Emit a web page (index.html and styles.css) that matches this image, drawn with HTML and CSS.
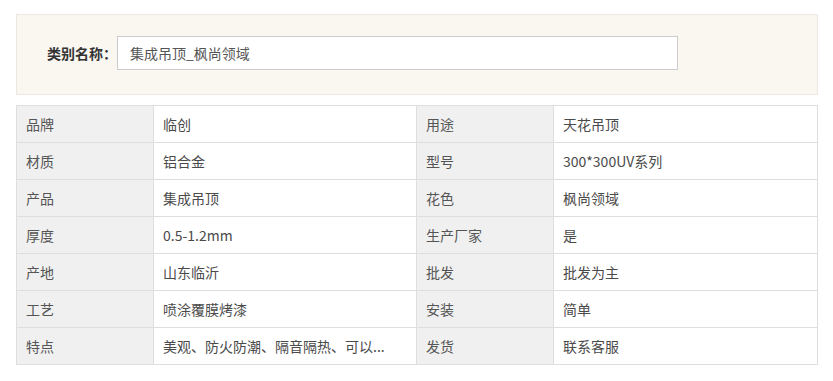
FILE: index.html
```html
<!DOCTYPE html>
<html>
<head>
<meta charset="utf-8">
<link rel="stylesheet" href="styles.css">
</head>
<body>
<div class="page">
  <div class="filter">
    <span class="filter-label">类别名称：</span>
    <div class="filter-input">集成吊顶_枫尚领域</div>
  </div>
  <table class="specs">
    <colgroup>
      <col class="c-key"><col class="c-val"><col class="c-key"><col class="c-val2">
    </colgroup>
    <tr><td class="key">品牌</td><td>临创</td><td class="key">用途</td><td>天花吊顶</td></tr>
    <tr><td class="key">材质</td><td>铝合金</td><td class="key">型号</td><td>300*300UV系列</td></tr>
    <tr><td class="key">产品</td><td>集成吊顶</td><td class="key">花色</td><td>枫尚领域</td></tr>
    <tr><td class="key">厚度</td><td>0.5-1.2mm</td><td class="key">生产厂家</td><td>是</td></tr>
    <tr><td class="key">产地</td><td>山东临沂</td><td class="key">批发</td><td>批发为主</td></tr>
    <tr><td class="key">工艺</td><td>喷涂覆膜烤漆</td><td class="key">安装</td><td>简单</td></tr>
    <tr><td class="key">特点</td><td>美观、防火防潮、隔音隔热、可以...</td><td class="key">发货</td><td>联系客服</td></tr>
  </table>
</div>
</body>
</html>
```
FILE: styles.css
```css
html, body {
  margin: 0;
  padding: 0;
  background: #fff;
}
body {
  font-family: "Noto Sans CJK SC", "Noto Sans", sans-serif;
  font-size: 14px;
  color: #333;
}
.page {
  padding: 14px 15px 0 16px;
}
.filter {
  box-sizing: border-box;
  height: 81px;
  background: #faf7f1;
  border: 1px solid #ece8e1;
  display: flex;
  align-items: center;
  padding-left: 30px;
  padding-bottom: 12px;
  padding-top: 8px;
}
.filter-label {
  font-weight: bold;
  color: #333;
  width: 70px;
  flex: none;
}
.filter-input {
  box-sizing: border-box;
  width: 561px;
  height: 34px;
  background: #fff;
  border: 1px solid #ccc;
  display: flex;
  align-items: center;
  padding-left: 12px;
  color: #555;
}
.specs {
  margin-top: 10px;
  width: 802px;
  border-collapse: collapse;
  table-layout: fixed;
}
.c-key { width: 137px; }
.c-val { width: 263px; }
.c-val2 { width: 264px; }
.specs td {
  border: 1px solid #dedede;
  height: 37px;
  box-sizing: border-box;
  padding: 0 9px;
  color: #4a4a4a;
  white-space: nowrap;
  overflow: hidden;
}
.specs td.key {
  background: #f0f0f0;
  color: #555;
}
```
